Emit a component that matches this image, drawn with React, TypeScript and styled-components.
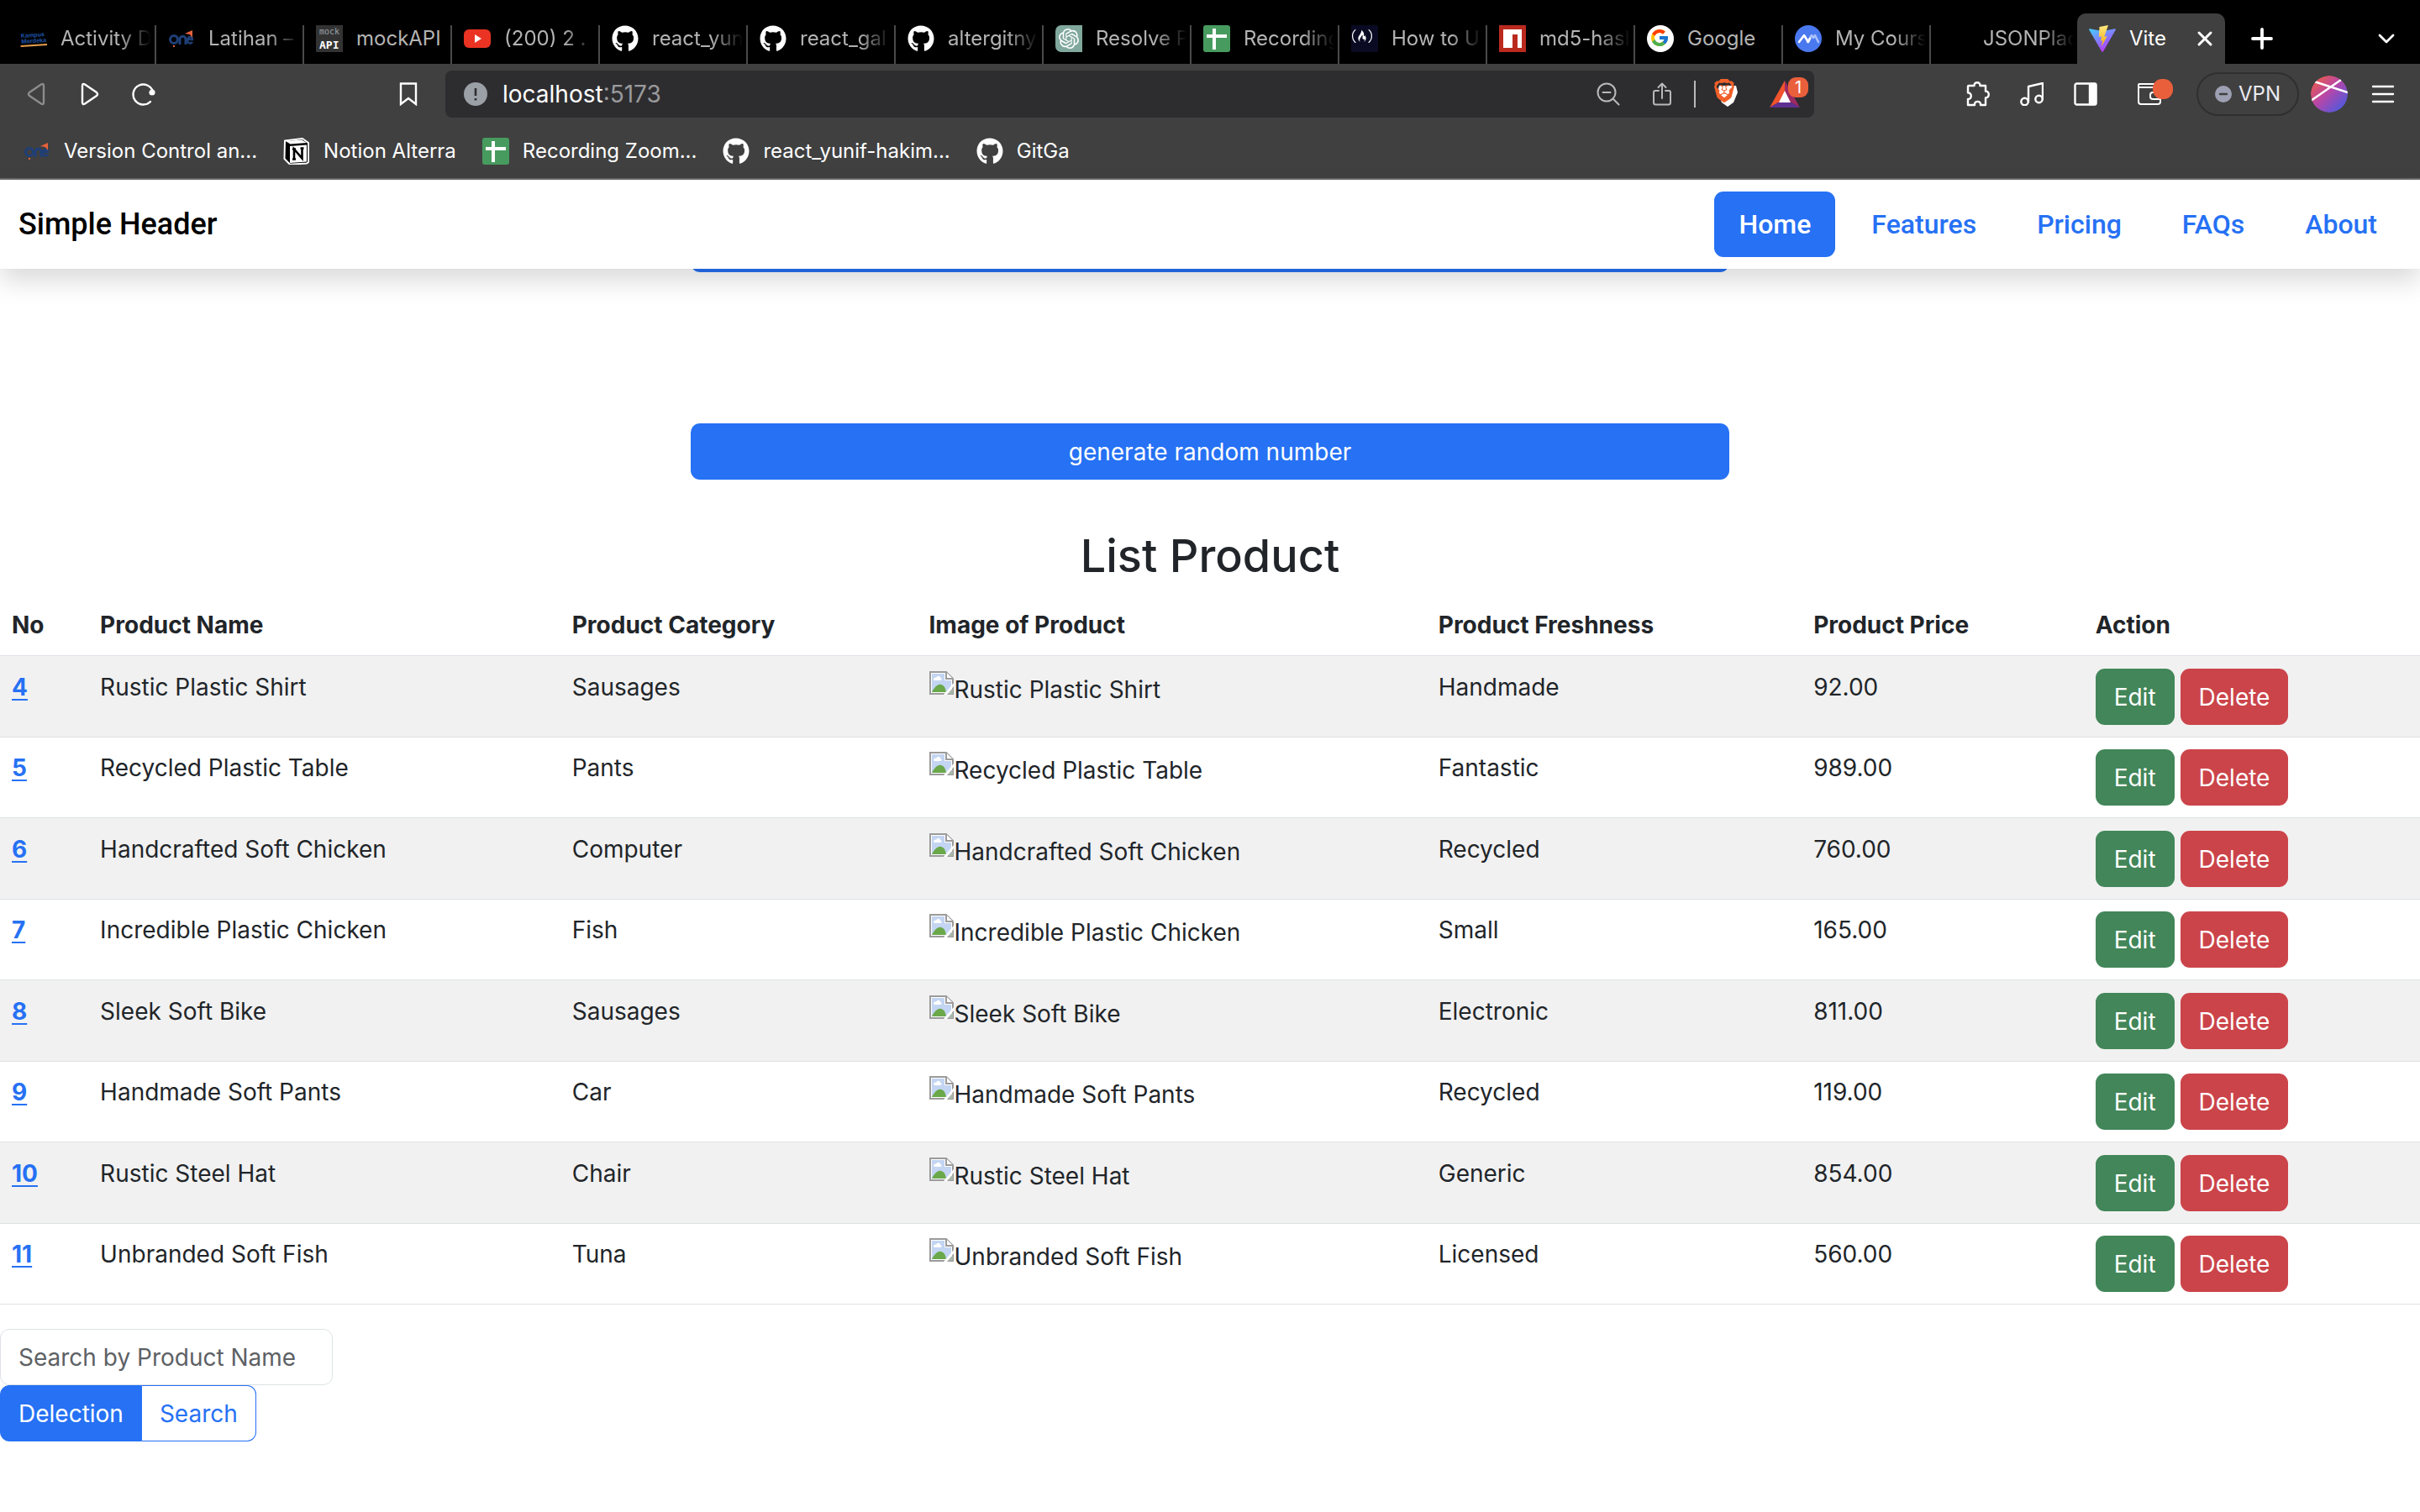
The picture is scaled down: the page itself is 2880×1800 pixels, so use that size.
import React from "react";
import styled, { createGlobalStyle, css } from "styled-components";
import { FaGithub } from "react-icons/fa";
import { FcGoogle } from "react-icons/fc";
import { SiBrave, SiFreecodecamp, SiNpm, SiOpenai } from "react-icons/si";

const blue = "#2671f4";
const ink = "#212529";
const line = "#dee2e6";

const GlobalStyle = createGlobalStyle`
  *, *::before, *::after { box-sizing: border-box; }
  body {
    margin: 0;
    background: #fff;
    color: ${ink};
    font-family: Inter, "Liberation Sans", sans-serif;
    font-size: 28px;
    line-height: 45px;
  }
  button, input { font: inherit; color: inherit; margin: 0; }
  button { cursor: pointer; }
  svg { display: block; flex: none; }
`;

/* ---------- browser window ---------- */

const Chrome = styled.div`
  background: #404040;
  border-bottom: 2px solid #6a6a6a;
  color: #fff;
  font-size: 24px;
  line-height: 32px;
`;

const TabStrip = styled.div`
  display: flex;
  align-items: flex-end;
  height: 76px;
  padding-left: 10px;
  background: #000;
`;

const Tab = styled.button<{ $active?: boolean; $last?: boolean }>`
  display: flex;
  align-items: flex-start;
  gap: 16px;
  width: 176px;
  height: 46px;
  padding: 0 4px 0 14px;
  border: 0;
  border-right: 2px solid ${(p) => (p.$last ? "transparent" : "#4a4a4a")};
  background: none;
  color: #b4b4b4;
  text-align: left;
  ${(p) =>
    p.$active &&
    css`
      height: 60px;
      margin: 0 4px 0 -2px;
      padding: 14px 12px 0 14px;
      border-right: 0;
      border-radius: 10px 10px 0 0;
      background: #404040;
      color: #fff;
    `}
`;

const Favicon = styled.span`
  display: flex;
  flex: none;
  align-items: center;
  justify-content: center;
  width: 32px;
  height: 32px;
`;

const TabTitle = styled.span<{ $fade?: boolean }>`
  flex: 1;
  min-width: 0;
  overflow: hidden;
  white-space: nowrap;
  ${(p) => p.$fade && "mask-image: linear-gradient(to right, #000 65%, transparent);"}
`;

const StripButton = styled.button`
  display: flex;
  align-items: center;
  justify-content: center;
  width: 80px;
  height: 60px;
  padding: 0;
  border: 0;
  background: none;
`;

const StripSpacer = styled.div`
  flex: 1;
`;

const Toolbar = styled.div`
  display: flex;
  align-items: center;
  height: 72px;
`;

const NavTools = styled.div`
  display: flex;
  justify-content: space-between;
  width: 530px;
  padding: 0 12px 0 11px;
`;

const ToolGroup = styled.div`
  display: flex;
  align-items: center;
`;

const IconButton = styled.button`
  display: flex;
  position: relative;
  align-items: center;
  justify-content: center;
  width: 64px;
  height: 56px;
  padding: 0;
  border: 0;
  background: none;
`;

const AddressBar = styled.div`
  display: flex;
  flex: 1;
  align-items: center;
  height: 56px;
  padding: 0 17px 0 22px;
  border-radius: 8px;
  background: #2d2d30;
  font-size: 28px;
`;

const AddressInput = styled.input`
  field-sizing: content;
  margin-left: 18px;
  padding: 0;
  border: 0;
  outline: 0;
  background: none;
  color: #fff;
`;

const Port = styled.span`
  flex: 1;
  color: #9a9a9c;
`;

const Divider = styled.span`
  width: 2px;
  height: 32px;
  margin: 0 20px 0 6px;
  background: #b9b9bb;
`;

const PlainButton = styled.button`
  padding: 0;
  border: 0;
  background: none;
`;

const Rewards = styled(PlainButton)`
  position: relative;
  margin-left: 32px;
`;

const Badge = styled.span`
  position: absolute;
  top: -4px;
  right: -10px;
  width: 24px;
  height: 24px;
  border-radius: 9px;
  background: #ea5f3b;
  color: #fff;
  font-size: 20px;
  line-height: 24px;
  text-align: center;
`;

const WalletBadge = styled(Badge)`
  top: 10px;
  right: 4px;
  border-radius: 11px;
`;

const SideTools = styled.div`
  display: flex;
  align-items: center;
  justify-content: flex-end;
  width: 721px;
  padding-right: 12px;
`;

const Wallet = styled(IconButton)`
  margin: 0 24px 0 12px;
`;

const VpnButton = styled.button`
  display: flex;
  align-items: center;
  justify-content: center;
  gap: 8px;
  width: 122px;
  height: 52px;
  padding: 0;
  border: 2px solid #2f2f2f;
  border-radius: 26px;
  background: none;
  color: #ececf2;
`;

const Avatar = styled(PlainButton)`
  width: 44px;
  height: 44px;
  margin: 0 10px 0 14px;
`;

const BookmarksBar = styled.nav`
  display: flex;
  align-items: center;
  gap: 31px;
  height: 64px;
  padding-left: 28px;
`;

const Bookmark = styled.a`
  display: flex;
  align-items: center;
  gap: 16px;
  color: #fff;
  text-decoration: none;
`;

/* ---------- page ---------- */

const Page = styled.div`
  position: relative;
`;

const Header = styled.header`
  position: absolute;
  z-index: 1;
  inset: 0 0 auto;
  display: flex;
  align-items: center;
  justify-content: space-between;
  padding: 14px 22px;
  background: #fff;
  box-shadow: 0 14px 29px rgba(0, 0, 0, 0.15);
  font-family: Roboto, "Liberation Sans", sans-serif;
  font-weight: 500;
`;

const Brand = styled.a`
  color: #000;
  font-size: 36px;
  text-decoration: none;
`;

const Pills = styled.nav`
  display: flex;
  gap: 14px;
`;

const Pill = styled.a<{ $active?: boolean }>`
  padding: 14px 29px;
  border-radius: 11px;
  background: ${(p) => (p.$active ? blue : "transparent")};
  color: ${(p) => (p.$active ? "#fff" : blue)};
  font-size: 32px;
  line-height: 50px;
  text-decoration: none;
`;

const Generator = styled.section`
  display: flex;
  flex-direction: column;
  align-items: center;
  gap: 180px;
  padding-top: 43px;
`;

const buttonBox = css`
  height: 67px;
  padding: 2px 21px 0;
  border: 1px solid transparent;
  border-radius: 11px;
`;

const WideButton = styled.button`
  ${buttonBox}
  width: 100%;
  max-width: 1236px;
  background: ${blue};
  color: #fff;
`;

const Title = styled.h2`
  margin: 56px 0 12px;
  font-size: 54px;
  font-weight: 500;
  line-height: 69px;
  text-align: center;
`;

const ProductTable = styled.table`
  width: 100%;
  border-spacing: 0;
  table-layout: fixed;
`;

const Col = styled.col<{ $width: string }>`
  width: ${(p) => p.$width};
`;

const HeadCell = styled.th`
  padding: 14px 14px 13px;
  border-bottom: 1px solid ${line};
  font-weight: 700;
  text-align: left;
`;

const Row = styled.tr`
  > * {
    padding: 14px;
    border-bottom: 1px solid ${line};
    font-weight: 400;
    text-align: left;
    vertical-align: top;
  }
  &:nth-child(odd) > * {
    padding-top: 15px;
    background: #f1f1f1;
  }
`;

const NumberLink = styled.a`
  color: ${blue};
  font-weight: 700;
  text-underline-offset: 4px;
  text-decoration-thickness: 2px;
`;

const MissingImage = styled.span`
  display: flex;
  align-items: flex-start;
  gap: 1px;
  padding-top: 3px;
`;

const Actions = styled.div`
  display: flex;
  gap: 7px;
`;

const ActionButton = styled.button<{ $danger?: boolean }>`
  ${buttonBox}
  background: ${(p) => (p.$danger ? "#cb444a" : "#428659")};
  color: #fff;
`;

const SearchForm = styled.form`
  display: flex;
  flex-direction: column;
  align-items: flex-start;
  margin-top: 29px;
`;

const SearchInput = styled.input`
  width: 396px;
  height: 67px;
  padding: 0 21px;
  border: 1px solid ${line};
  border-radius: 11px;
  background: #fff;
  &::placeholder {
    color: #5d6165;
    opacity: 1;
  }
`;

const ButtonGroup = styled.div`
  display: flex;
`;

const GroupButton = styled.button<{ $solid?: boolean }>`
  ${buttonBox}
  border-color: ${blue};
  border-radius: ${(p) => (p.$solid ? "11px 0 0 11px" : "0 11px 11px 0")};
  border-left-width: ${(p) => (p.$solid ? "1px" : "0")};
  background: ${(p) => (p.$solid ? blue : "#fff")};
  color: ${(p) => (p.$solid ? "#fff" : blue)};
`;

/* ---------- drawings ---------- */

const KampusIcon = () => (
  <svg width="32" height="32" viewBox="0 0 32 32">
    <g transform="rotate(-4 16 16)" fontFamily="Inter, sans-serif" fontWeight="700" fontSize="7" fill="#1d4fa0">
      <text x="1" y="14">Kampus</text>
      <text x="1" y="21">Merdeka</text>
      <rect x="0" y="23" width="32" height="2" fill="#e8a04c" />
    </g>
  </svg>
);

const OneIcon = () => (
  <svg width="32" height="32" viewBox="0 0 32 32" fill="none" stroke="#1f3f77" strokeWidth="3">
    <circle cx="7" cy="17" r="4.5" />
    <path d="M14 23v-6c0-5 7-5 7 0v6" />
    <path d="M29 20c-2 3-7 1-6-3 1-4 6-4 6 0h-5" strokeWidth="2.5" />
    <path d="M20 10 29 6v9l-3-4z" fill="#e8623c" stroke="none" />
    <path d="M7 24v2" stroke="#e8623c" strokeWidth="2" />
  </svg>
);

const MockIcon = () => (
  <svg width="32" height="32" viewBox="0 0 32 32" fontFamily="DejaVu Sans Mono, monospace">
    <path fill="#333" d="M0 0h32v32H0z" />
    <text x="4" y="11" fontSize="10" fill="#9aa4ad">mock</text>
    <text x="4" y="28" fontSize="13" fontWeight="700" fill="#fff">API</text>
  </svg>
);

const YoutubeIcon = () => (
  <svg width="32" height="32" viewBox="0 0 32 32">
    <rect y="5" width="32" height="22" rx="6" fill="#ea3323" />
    <path d="m13 11 8 5-8 5z" fill="#fff" />
  </svg>
);

const SheetIcon = () => (
  <svg width="32" height="32" viewBox="0 0 32 32">
    <rect width="32" height="32" rx="3" fill="#479b5f" />
    <path d="M4 13h24M13 4v25" stroke="#fff" strokeWidth="4" />
  </svg>
);

const OpenAiIcon = () => (
  <svg width="32" height="32" viewBox="0 0 32 32">
    <path d="M7 0h25v32H7a7 7 0 0 1-7-7V7a7 7 0 0 1 7-7z" fill="#80a89c" />
    <SiOpenai x="4" y="4" width="24" height="24" color="#fff" />
  </svg>
);

const CampIcon = () => (
  <svg width="32" height="32" viewBox="0 0 32 32">
    <path fill="#0a0a23" d="M0 0h32v32H0z" />
    <SiFreecodecamp x="1" y="1" width="30" height="30" color="#fff" />
  </svg>
);

const NpmIcon = () => (
  <svg width="32" height="32" viewBox="0 0 32 32">
    <path fill="#ba2a1e" d="M0 0h32v32H0z" />
    <path fill="#fff" d="M5 5h22v22h-5V11h-6v16H5z" />
  </svg>
);

const GoogleIcon = () => (
  <svg width="32" height="32" viewBox="0 0 32 32">
    <circle cx="16" cy="16" r="16" fill="#fff" />
    <FcGoogle x="3" y="3" width="26" height="26" />
  </svg>
);

const CourseIcon = () => (
  <svg width="32" height="32" viewBox="0 0 32 32" fill="none" strokeWidth="2.6" strokeLinejoin="round" strokeLinecap="round">
    <circle cx="16" cy="16" r="16" fill="#4a78ee" />
    <path d="m15 20 5-8 2 3 2-3 4 8" stroke="#a9c0fa" />
    <path d="m5 20 6-8 5 8 2-4" stroke="#fff" />
  </svg>
);

const ViteIcon = () => (
  <svg width="32" height="32" viewBox="0 0 32 32">
    <defs>
      <linearGradient id="viteBody" x1="0" y1="0" x2="0.6" y2="1">
        <stop stopColor="#41d1ff" />
        <stop offset="1" stopColor="#bd34fe" />
      </linearGradient>
      <linearGradient id="viteBolt" x1="0" y1="0" x2="0" y2="1">
        <stop stopColor="#ffea83" />
        <stop offset="1" stopColor="#ffa800" />
      </linearGradient>
    </defs>
    <path d="M1 4.200 16 7l15-2.800c.8 0 1.200.6.800 1.300L17 31.200c-.4.700-1.400.7-1.800 0L.2 5.500C-.2 4.800.2 4.100 1 4.200z" fill="url(#viteBody)" />
    <path d="M23 0 12.500 2 11.800 14l3.200-.7-1 5.500 2.300-.7-1.500 7.400 7-12.500-3.600.7z" fill="url(#viteBolt)" />
  </svg>
);

const NotionIcon = () => (
  <svg width="32" height="32" viewBox="0 0 32 32">
    <path d="M2 3.500 23 1l7 5v23l-2 1.500-20 1.200L1.500 25z" fill="#000" stroke="#fff" strokeWidth="2" strokeLinejoin="round" />
    <path d="M3 4 22 2.500 28 6 8.500 7.500z" fill="#fff" />
    <path d="M8 10 28 8.600v20L8 30z" fill="#fff" />
    <path d="M13 25.500V13.500l9.500 11V12.500M11 13.500h4M20.500 12.500h4M11 25.500h4" stroke="#000" strokeWidth="2.600" fill="none" />
  </svg>
);

const BraveIcon = () => (
  <svg width="36" height="36" viewBox="0 0 36 36">
    <path d="M8 8h20l2 8-5 12-7 5-7-5-5-12z" fill="#fff" />
    <SiBrave width="36" height="36" color="#f1602a" />
  </svg>
);

const BrokenImage = () => (
  <svg width="29" height="28" viewBox="0 0 29 28">
    <path d="M1 1h19l8 8v18H1z" fill="#fff" stroke="#9b9b9b" strokeWidth="2" />
    <path d="M3 3h15v8h8v14H3z" fill="#c3d5f2" />
    <path d="M5 10c0-2 2-3 3-2 1-3 5-3 5 0 2 0 2 3 0 3H6z" fill="#fff" />
    <path d="M3 25c3-6 7-10 11-9s5 4 6 9z" fill="#6aa84a" />
    <path d="M20 1v8h8" fill="#fff" stroke="#9b9b9b" strokeWidth="2" />
    <path d="M17 28 29 14v4l-8 10z" fill="#fff" />
    <path d="m22 27 6-7v7z" fill="#a9b7a9" />
  </svg>
);

const RewardsIcon = () => (
  <svg width="36" height="32" viewBox="0 0 36 32">
    <path d="M18 0 0 32l12-7 6-12z" fill="#f0532d" />
    <path d="M18 0v13l6 12 12 7z" fill="#9e2a63" />
    <path d="m0 32 12-7h12l12 7z" fill="#5f3090" />
    <path d="m18 12 7 14H11z" fill="#fff" />
  </svg>
);

const toolStroke = { fill: "none", stroke: "#fff", strokeWidth: 2.4, strokeLinejoin: "round", strokeLinecap: "round" } as const;

const Triangle = ({ back }: { back?: boolean }) => (
  <svg width="22" height="28" viewBox="0 0 22 28" {...toolStroke} stroke={back ? "#8c8c8c" : "#fff"}>
    <path d={back ? "M20 4v20q0 3-3 1.500L3 16q-2-2 0-4L17 2.500Q20 1 20 4z" : "M2 4v20q0 3 3 1.500L19 16q2-2 0-4L5 2.500Q2 1 2 4z"} />
  </svg>
);

const ReloadIcon = () => (
  <svg width="28" height="28" viewBox="0 0 28 28" {...toolStroke}>
    <path d="M22 23A12 12 0 1 1 25 11" />
    <circle cx="24" cy="12" r="2.400" fill="#fff" />
  </svg>
);

const BookmarkIcon = () => (
  <svg width="22" height="28" viewBox="0 0 22 28" {...toolStroke} strokeLinejoin="miter">
    <path d="M2 1.500h18V26l-9-7-9 7z" />
  </svg>
);

const InfoIcon = () => (
  <svg width="28" height="28" viewBox="0 0 28 28">
    <circle cx="14" cy="14" r="14" fill="#9aa0a6" />
    <path d="M14 7v9M14 19v2.400" stroke="#2d2d30" strokeWidth="2.600" />
  </svg>
);

const ZoomOutIcon = () => (
  <svg width="28" height="28" viewBox="0 0 28 28" {...toolStroke} stroke="#b9b9bb" strokeWidth={2}>
    <circle cx="12" cy="12" r="10.500" />
    <path d="m19.500 19.500 7 7M7.500 12h9" />
  </svg>
);

const ShareIcon = () => (
  <svg width="24" height="28" viewBox="0 0 24 28" {...toolStroke} stroke="#b9b9bb" strokeWidth={2}>
    <path d="M8 10H4q-2 0-2 2v12q0 2.500 2.500 2.500h15q2.500 0 2.500-2.500V12q0-2-2-2h-4M12 19V1.500M7.500 6 12 1.500 16.500 6" />
  </svg>
);

const PuzzleIcon = () => (
  <svg width="28" height="30" viewBox="0 0 28 30" {...toolStroke}>
    <path d="M3 5h6.500c-.5-5 7.500-5 7 0H23v6.500c5 0 5 8 0 8V28h-6c1-5.500-8-5.500-7 0H2v-7c5 .5 5-8 0-7.500V6q0-1 1-1z" />
  </svg>
);

const MusicIcon = () => (
  <svg width="28" height="28" viewBox="0 0 28 28" {...toolStroke}>
    <path d="M10 23V5l17-4v19" />
    <circle cx="5.500" cy="23" r="4.200" />
    <circle cx="22.500" cy="20" r="4.200" />
  </svg>
);

const SidebarIcon = () => (
  <svg width="28" height="28" viewBox="0 0 28 28" {...toolStroke}>
    <rect x="1.500" y="1.500" width="25" height="25" rx="2" />
    <path d="M19 2h7v24h-7z" fill="#fff" />
  </svg>
);

const WalletIcon = () => (
  <svg width="28" height="26" viewBox="0 0 28 26" {...toolStroke} strokeWidth={2}>
    <rect x="1" y="1" width="22" height="4" rx="1" />
    <path d="M1 3v19q0 3 3 3h20q3 0 3-3V8q0-3-3-3H4" />
    <path d="M27 11h-9q-3 0-3 3v2q0 3 3 3h9" />
  </svg>
);

const AvatarArt = () => (
  <svg width="44" height="44" viewBox="0 0 44 44">
    <defs>
      <linearGradient id="orb" x1="0.1" y1="0.1" x2="0.9" y2="0.9">
        <stop stopColor="#ea5b4a" />
        <stop offset="0.45" stopColor="#b846a8" />
        <stop offset="1" stopColor="#4a5ae0" />
      </linearGradient>
      <clipPath id="orbClip">
        <circle cx="22" cy="22" r="22" />
      </clipPath>
    </defs>
    <g clipPath="url(#orbClip)">
      <circle cx="22" cy="22" r="22" fill="url(#orb)" />
      <path d="m4 7 40 13M0 30 36 5" stroke="#fff" strokeWidth="2.400" />
    </g>
  </svg>
);

const MenuIcon = () => (
  <svg width="28" height="22" viewBox="0 0 28 22" {...toolStroke}>
    <path d="M2 2h24M2 11h24M2 20h24" />
  </svg>
);

const GithubMark = () => <FaGithub size={32} color="#fff" />;

/* ---------- data ---------- */

const tabs: { title: string; icon?: React.ReactNode; whole?: boolean }[] = [
  { title: "Activity D", icon: <KampusIcon /> },
  { title: "Latihan –", icon: <OneIcon /> },
  { title: "mockAPI", icon: <MockIcon />, whole: true },
  { title: "(200) 2 .", icon: <YoutubeIcon /> },
  { title: "react_yun", icon: <GithubMark /> },
  { title: "react_gal", icon: <GithubMark /> },
  { title: "altergitny", icon: <GithubMark /> },
  { title: "Resolve P", icon: <OpenAiIcon /> },
  { title: "Recording", icon: <SheetIcon /> },
  { title: "How to U", icon: <CampIcon /> },
  { title: "md5-hash", icon: <NpmIcon /> },
  { title: "Google", icon: <GoogleIcon />, whole: true },
  { title: "My Cours", icon: <CourseIcon /> },
  { title: "JSONPlac" },
];

const bookmarks = [
  { title: "Version Control an...", icon: <OneIcon /> },
  { title: "Notion Alterra", icon: <NotionIcon /> },
  { title: "Recording Zoom...", icon: <SheetIcon /> },
  { title: "react_yunif-hakim...", icon: <GithubMark /> },
  { title: "GitGa", icon: <GithubMark /> },
];

const columns = [
  { label: "No", width: "3.65%" },
  { label: "Product Name", width: "19.5%" },
  { label: "Product Category", width: "14.75%" },
  { label: "Image of Product", width: "21.05%" },
  { label: "Product Freshness", width: "15.5%" },
  { label: "Product Price", width: "11.65%" },
  { label: "Action", width: "13.9%" },
];

const products = [
  { no: 4, name: "Rustic Plastic Shirt", category: "Sausages", freshness: "Handmade", price: "92.00" },
  { no: 5, name: "Recycled Plastic Table", category: "Pants", freshness: "Fantastic", price: "989.00" },
  { no: 6, name: "Handcrafted Soft Chicken", category: "Computer", freshness: "Recycled", price: "760.00" },
  { no: 7, name: "Incredible Plastic Chicken", category: "Fish", freshness: "Small", price: "165.00" },
  { no: 8, name: "Sleek Soft Bike", category: "Sausages", freshness: "Electronic", price: "811.00" },
  { no: 9, name: "Handmade Soft Pants", category: "Car", freshness: "Recycled", price: "119.00" },
  { no: 10, name: "Rustic Steel Hat", category: "Chair", freshness: "Generic", price: "854.00" },
  { no: 11, name: "Unbranded Soft Fish", category: "Tuna", freshness: "Licensed", price: "560.00" },
];

const links = ["Home", "Features", "Pricing", "FAQs", "About"];

/* ---------- app ---------- */

const BrowserChrome = () => (
  <Chrome>
    <TabStrip>
      {tabs.map((tab, i) => (
        <Tab key={tab.title} type="button" $last={i === tabs.length - 1}>
          <Favicon>{tab.icon}</Favicon>
          <TabTitle $fade={!tab.whole}>{tab.title}</TabTitle>
        </Tab>
      ))}
      <Tab as="div" $active>
        <Favicon><ViteIcon /></Favicon>
        <TabTitle>Vite</TabTitle>
        <PlainButton type="button" aria-label="Close tab">
          <svg width="24" height="32" viewBox="0 0 24 32" {...toolStroke} strokeWidth={3}>
            <path d="m5 9 14 14M19 9 5 23" />
          </svg>
        </PlainButton>
      </Tab>
      <StripButton type="button" aria-label="New tab">
        <svg width="26" height="26" viewBox="0 0 26 26" {...toolStroke} strokeWidth={3.8}>
          <path d="M13 2v22M2 13h22" />
        </svg>
      </StripButton>
      <StripSpacer />
      <StripButton type="button" aria-label="Search tabs">
        <svg width="20" height="12" viewBox="0 0 20 12" {...toolStroke} strokeWidth={2.8}>
          <path d="m2 2 8 8 8-8" />
        </svg>
      </StripButton>
    </TabStrip>
    <Toolbar>
      <NavTools>
        <ToolGroup>
          <IconButton type="button" aria-label="Back"><Triangle back /></IconButton>
          <IconButton type="button" aria-label="Forward"><Triangle /></IconButton>
          <IconButton type="button" aria-label="Reload"><ReloadIcon /></IconButton>
        </ToolGroup>
        <IconButton type="button" aria-label="Bookmark"><BookmarkIcon /></IconButton>
      </NavTools>
      <AddressBar>
        <InfoIcon />
        <AddressInput aria-label="Address" defaultValue="localhost" />
        <Port>:5173</Port>
        <IconButton type="button" aria-label="Zoom"><ZoomOutIcon /></IconButton>
        <IconButton type="button" aria-label="Share"><ShareIcon /></IconButton>
        <Divider />
        <PlainButton type="button" aria-label="Shields"><BraveIcon /></PlainButton>
        <Rewards type="button" aria-label="Rewards">
          <RewardsIcon />
          <Badge>1</Badge>
        </Rewards>
      </AddressBar>
      <SideTools>
        <IconButton type="button" aria-label="Extensions"><PuzzleIcon /></IconButton>
        <IconButton type="button" aria-label="Playlist"><MusicIcon /></IconButton>
        <IconButton type="button" aria-label="Sidebar"><SidebarIcon /></IconButton>
        <Wallet type="button" aria-label="Wallet">
          <WalletIcon />
          <WalletBadge />
        </Wallet>
        <VpnButton type="button">
          <svg width="20" height="20" viewBox="0 0 20 20">
            <circle cx="10" cy="10" r="10" fill="#9d9fb3" />
            <path d="M6 10h8" stroke="#404040" strokeWidth="2.400" strokeLinecap="round" />
          </svg>
          VPN
        </VpnButton>
        <Avatar type="button" aria-label="Profile"><AvatarArt /></Avatar>
        <IconButton type="button" aria-label="Menu"><MenuIcon /></IconButton>
      </SideTools>
    </Toolbar>
    <BookmarksBar>
      {bookmarks.map((b) => (
        <Bookmark key={b.title} href="#">
          <Favicon>{b.icon}</Favicon>
          {b.title}
        </Bookmark>
      ))}
    </BookmarksBar>
  </Chrome>
);

export default function App() {
  return (
    <>
      <GlobalStyle />
      <BrowserChrome />
      <Page>
        <Header>
          <Brand href="#">Simple Header</Brand>
          <Pills>
            {links.map((label, i) => (
              <Pill key={label} href="#" $active={i === 0}>{label}</Pill>
            ))}
          </Pills>
        </Header>
        <main>
          <Generator>
            <WideButton type="button" aria-label="Submit" />
            <WideButton type="button">generate random number</WideButton>
          </Generator>
          <Title>List Product</Title>
          <ProductTable>
            <colgroup>
              {columns.map((c) => <Col key={c.label} $width={c.width} />)}
            </colgroup>
            <thead>
              <tr>
                {columns.map((c) => <HeadCell key={c.label} scope="col">{c.label}</HeadCell>)}
              </tr>
            </thead>
            <tbody>
              {products.map((p) => (
                <Row key={p.no}>
                  <th scope="row"><NumberLink href="#">{p.no}</NumberLink></th>
                  <td>{p.name}</td>
                  <td>{p.category}</td>
                  <td><MissingImage><BrokenImage />{p.name}</MissingImage></td>
                  <td>{p.freshness}</td>
                  <td>{p.price}</td>
                  <td>
                    <Actions>
                      <ActionButton type="button">Edit</ActionButton>
                      <ActionButton type="button" $danger>Delete</ActionButton>
                    </Actions>
                  </td>
                </Row>
              ))}
            </tbody>
          </ProductTable>
          <SearchForm onSubmit={(e) => e.preventDefault()}>
            <SearchInput type="text" aria-label="Search by Product Name" placeholder="Search by Product Name" />
            <ButtonGroup>
              <GroupButton type="button" $solid>Delection</GroupButton>
              <GroupButton type="submit">Search</GroupButton>
            </ButtonGroup>
          </SearchForm>
        </main>
      </Page>
    </>
  );
}
